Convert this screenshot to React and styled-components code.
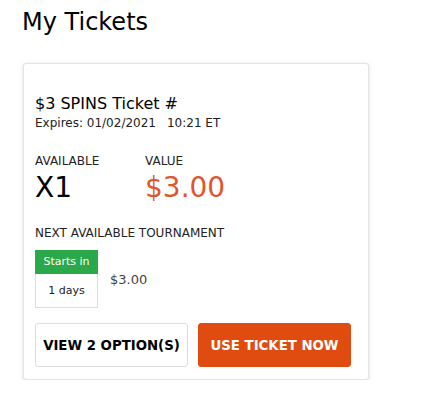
import React from 'react';
import styled, { createGlobalStyle } from 'styled-components';

const GlobalStyle = createGlobalStyle`
  body {
    margin: 0;
    background: #fff;
    font-family: 'DejaVu Sans', Verdana, sans-serif;
    color: #111;
  }
`;

const Page = styled.div`
  padding: 8px 0 0 22px;
`;

const Title = styled.h1`
  margin: 0 0 27px;
  font-size: 24px;
  font-weight: normal;
  line-height: 28px;
  color: #000;
`;

const Card = styled.div`
  width: 346px;
  box-sizing: border-box;
  margin-left: 1px;
  padding: 30px 11px 12px;
  background: #fff;
  border: 1px solid #e4e4e4;
  border-radius: 3px;
  box-shadow: 0 1px 4px rgba(0, 0, 0, 0.12);
`;

const TicketName = styled.div`
  font-size: 16px;
  line-height: 20px;
  color: #000;
`;

const Expires = styled.div`
  margin-top: 1px;
  font-size: 12px;
  line-height: 16px;
  color: #222;
  span {
    margin-left: 11px;
  }
`;

const Stats = styled.div`
  display: flex;
  margin-top: 23px;
`;

const Stat = styled.div`
  width: ${({ w }) => w}px;
`;

const Label = styled.div`
  font-size: 12px;
  line-height: 15px;
  color: #222;
`;

const Big = styled.div`
  margin-top: 2px;
  font-size: 28px;
  line-height: 34px;
  color: ${({ color }) => color || '#000'};
`;

const Tournament = styled.div`
  margin-top: 21px;
`;

const Row = styled.div`
  display: flex;
  align-items: center;
  gap: 12px;
  margin-top: 9px;
`;

const Countdown = styled.div`
  width: 63px;
  font-size: 11px;
  text-align: center;
`;

const CountHead = styled.div`
  background: #2ba84a;
  color: #fff;
  height: 24px;
  line-height: 24px;
`;

const CountBody = styled.div`
  border: 1px solid #ddd;
  border-top: none;
  height: 33px;
  line-height: 33px;
  color: #222;
`;

const Prize = styled.div`
  font-size: 13px;
  color: #444;
`;

const Actions = styled.div`
  display: flex;
  gap: 10px;
  margin-top: 15px;
`;

const Button = styled.button`
  width: 153px;
  height: 44px;
  padding: 0;
  box-sizing: border-box;
  border-radius: 3px;
  font-family: 'DejaVu Sans', Verdana, sans-serif;
  font-weight: bold;
  font-size: 13.3px;
  border: 1px solid ${({ primary }) => (primary ? '#e04b10' : '#ddd')};
  background: ${({ primary }) => (primary ? '#e04b10' : '#fff')};
  color: ${({ primary }) => (primary ? '#fff' : '#000')};
  cursor: pointer;
`;

export default function App() {
  return (
    <>
      <GlobalStyle />
      <Page>
        <Title>My Tickets</Title>
        <Card>
          <TicketName>$3 SPINS Ticket #</TicketName>
          <Expires>
            Expires: 01/02/2021<span>10:21 ET</span>
          </Expires>
          <Stats>
            <Stat w={110}>
              <Label>AVAILABLE</Label>
              <Big>X1</Big>
            </Stat>
            <Stat w={120}>
              <Label>VALUE</Label>
              <Big color="#e0562a">$3.00</Big>
            </Stat>
          </Stats>
          <Tournament>
            <Label>NEXT AVAILABLE TOURNAMENT</Label>
            <Row>
              <Countdown>
                <CountHead>Starts in</CountHead>
                <CountBody>1 days</CountBody>
              </Countdown>
              <Prize>$3.00</Prize>
            </Row>
          </Tournament>
          <Actions>
            <Button>VIEW 2 OPTION(S)</Button>
            <Button primary>USE TICKET NOW</Button>
          </Actions>
        </Card>
      </Page>
    </>
  );
}
